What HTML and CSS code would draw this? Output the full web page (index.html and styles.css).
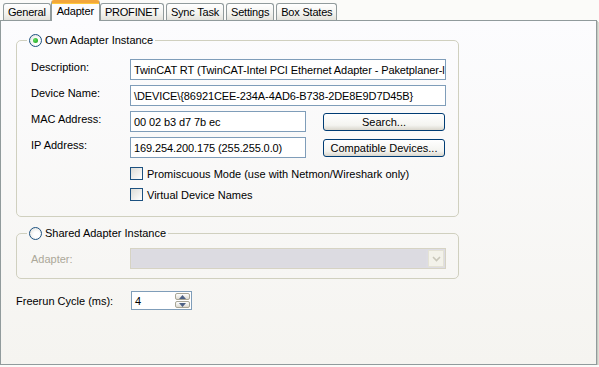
FILE: index.html
```html
<!DOCTYPE html>
<html lang="en">
<head>
    <meta charset="UTF-8">
    <title>Adapter</title>
    <link rel="stylesheet" href="styles.css">
</head>
<body>
    <div class="tabs">
        <div class="tab">General</div>
        <div class="tab active">Adapter</div>
        <div class="tab">PROFINET</div>
        <div class="tab">Sync Task</div>
        <div class="tab">Settings</div>
        <div class="tab">Box States</div>
    </div>

    <div class="page">
        <fieldset class="group own">
            <legend><span class="radio checked"></span>Own Adapter Instance</legend>

            <div class="row">
                <span class="label">Description:</span>
                <div class="field wide">TwinCAT RT (TwinCAT-Intel PCI Ethernet Adapter - Paketplaner-l</div>
            </div>
            <div class="row">
                <span class="label">Device Name:</span>
                <div class="field wide">\DEVICE\{86921CEE-234A-4AD6-B738-2DE8E9D7D45B}</div>
            </div>
            <div class="row">
                <span class="label">MAC Address:</span>
                <div class="field short">00 02 b3 d7 7b ec</div>
                <button class="btn">Search...</button>
            </div>
            <div class="row">
                <span class="label">IP Address:</span>
                <div class="field short">169.254.200.175 (255.255.0.0)</div>
                <button class="btn">Compatible Devices...</button>
            </div>

            <div class="checks">
                <div class="check"><span class="box"></span>Promiscuous Mode (use with Netmon/Wireshark only)</div>
                <div class="check"><span class="box"></span>Virtual Device Names</div>
            </div>
        </fieldset>

        <fieldset class="group shared">
            <legend><span class="radio"></span>Shared Adapter Instance</legend>
            <div class="row">
                <span class="label disabled">Adapter:</span>
                <div class="combo">
                    <div class="combo-value"></div>
                    <div class="combo-btn">
                        <svg width="9" height="6" viewBox="0 0 9 6"><path d="M1 1 L4.5 4.5 L8 1" fill="none" stroke="#c9c7ba" stroke-width="1.6"/></svg>
                    </div>
                </div>
            </div>
        </fieldset>

        <div class="freerun">
            <span class="label">Freerun Cycle (ms):</span>
            <div class="spin">
                <span class="spin-value">4</span>
                <div class="spin-btns">
                    <div class="spin-btn">
                        <svg width="7" height="4" viewBox="0 0 7 4"><path d="M0 4 L3.5 0 L7 4 Z" fill="#4d6185"/></svg>
                    </div>
                    <div class="spin-btn">
                        <svg width="7" height="4" viewBox="0 0 7 4"><path d="M0 0 L3.5 4 L7 0 Z" fill="#4d6185"/></svg>
                    </div>
                </div>
            </div>
        </div>
    </div>
</body>
</html>
```

FILE: styles.css
```css
* {
    box-sizing: border-box;
}

body {
    margin: 0;
    font-family: 'Liberation Sans', Arial, sans-serif;
    font-size: 11px;
    color: #000;
    background: #fbfbf9;
}

/* Tab strip */
.tabs {
    display: flex;
    align-items: flex-end;
    gap: 2px;
    height: 20px;
    padding-left: 3px;
    position: relative;
    z-index: 1;
}

.tab {
    height: 17px;
    padding: 0 4px;
    display: flex;
    align-items: center;
    border: 1px solid #919b9c;
    border-bottom: none;
    border-radius: 3px 3px 0 0;
    background: linear-gradient(#ffffff, #f3f3ef 60%, #e4e3dc);
    letter-spacing: -0.2px;
}

.tab.active {
    height: 21px;
    margin: 0 -2px -1px;
    padding: 0 5px 2px;
    border-top: 3px solid #f2a63a;
    background: #fcfcfe;
    box-shadow: inset 0 1px 0 #ffc83c;
}

/* Tab page */
.page {
    width: 597px;
    height: 345px;
    border: 1px solid #919b9c;
    background: linear-gradient(#fcfcfe, #f5f4f0);
    padding: 12px 0 0 15px;
    box-shadow: 1px 1px 0 #c7c9c0, 2px 2px 0 #dcded6;
}

.group {
    width: 443px;
    margin: 0;
    border: 1px solid #d0d0bf;
    border-radius: 5px;
    padding: 12px 12px 15px 14px;
}

.group legend {
    display: flex;
    align-items: center;
    gap: 3px;
    height: 14px;
    margin-left: -4px;
    padding: 0 2px;
}

.radio {
    width: 13px;
    height: 13px;
    border: 1px solid #1c5180;
    border-radius: 50%;
    background: radial-gradient(circle at 60% 60%, #ffffff 30%, #dcdcd6 100%);
    display: flex;
    align-items: center;
    justify-content: center;
}

.radio.checked::after {
    content: "";
    width: 5px;
    height: 5px;
    border-radius: 50%;
    background: radial-gradient(circle at 35% 35%, #5fe05f, #1b9a1b);
}

.row {
    display: flex;
    align-items: center;
    height: 21px;
    margin-bottom: 5px;
}

.label {
    width: 99px;
    flex: none;
}

/* labels in the top group sit a little above the field text */
.own .label {
    padding-bottom: 5px;
}

.label.disabled {
    color: #aca899;
}

.field {
    height: 21px;
    border: 1px solid #7f9db9;
    background: #fff;
    padding: 0 0 0 3px;
    display: flex;
    align-items: center;
    white-space: nowrap;
    overflow: hidden;
    letter-spacing: -0.1px;
}

.field.wide {
    width: 316px;
}

.field.short {
    width: 176px;
}

.btn {
    width: 122px;
    height: 18px;
    margin-left: 17px;
    padding: 0;
    border: 1px solid #003c74;
    border-radius: 3px;
    background: linear-gradient(#ffffff, #f4f4f0 70%, #d9d6cc);
    font-family: inherit;
    font-size: 11px;
    color: #000;
}

.checks {
    margin: 9px 0 0 99px;
    display: flex;
    flex-direction: column;
    gap: 8px;
}

.check {
    display: flex;
    align-items: center;
    gap: 4px;
}

.box {
    width: 13px;
    height: 13px;
    border: 1px solid #1c5180;
    background: linear-gradient(135deg, #dcdcd7, #ffffff);
}

/* Shared adapter group */
.shared {
    margin-top: 9px;
    padding-top: 8px;
    padding-bottom: 4px;
}

.combo {
    width: 316px;
    height: 21px;
    display: flex;
    border: 1px solid #d6d3c3;
    background: #dddce3;
    padding: 1px;
}

.combo-value {
    flex: 1;
    background: #dcdbe1;
}

.combo-btn {
    width: 16px;
    margin-left: 2px;
    background: #f3f2ea;
    border: 1px solid #e4e2d5;
    display: flex;
    align-items: center;
    justify-content: center;
}

/* Freerun row */
.freerun {
    display: flex;
    align-items: center;
    margin-top: 12px;
}

.freerun .label {
    width: 115px;
}

.spin {
    width: 61px;
    height: 19px;
    border: 1px solid #7f9db9;
    background: #fff;
    display: flex;
    align-items: center;
    justify-content: space-between;
    padding: 1px 1px 1px 3px;
}

.spin-btns {
    width: 15px;
    height: 100%;
    display: flex;
    flex-direction: column;
    gap: 1px;
}

.spin-btn {
    flex: 1;
    border: 1px solid #a9a696;
    border-radius: 2px;
    background: linear-gradient(#ffffff, #dedbd1);
    display: flex;
    align-items: center;
    justify-content: center;
}
```
